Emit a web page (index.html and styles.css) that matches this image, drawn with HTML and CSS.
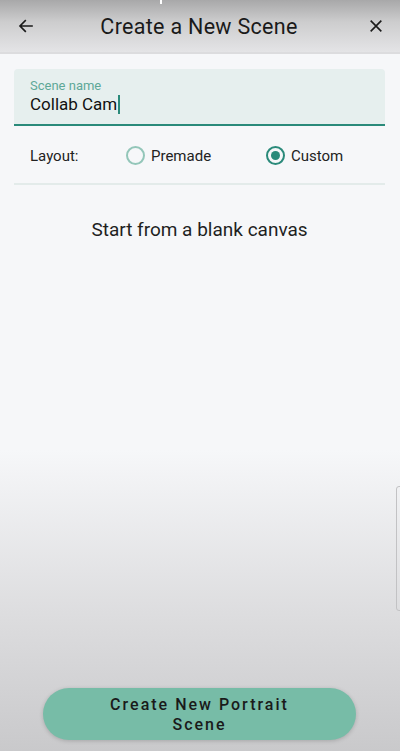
FILE: index.html
```html
<!DOCTYPE html>
<html lang="en">
<head>
    <meta charset="UTF-8">
    <title>Create a New Scene</title>
    <meta name="viewport" content="width=device-width, initial-scale=1">
    <link rel="stylesheet" href="styles.css">
</head>
<body>
    <div class="screen">
        <span class="notch-mark"></span>
        <header class="topbar">
            <button class="icon-btn" aria-label="Back">
                <svg width="18" height="18" viewBox="0 0 24 24"><path d="M20 12H5M11 5l-7 7 7 7" fill="none" stroke="#1a1a1a" stroke-width="2.2" stroke-linecap="square"/></svg>
            </button>
            <h1>Create a New Scene</h1>
            <button class="icon-btn" aria-label="Close">
                <svg width="16" height="16" viewBox="0 0 24 24"><path d="M4 4l16 16M20 4L4 20" fill="none" stroke="#1a1a1a" stroke-width="2.4"/></svg>
            </button>
        </header>

        <main class="content">
            <div class="text-field">
                <label for="scene-name">Scene name</label>
                <div class="value"><span id="scene-name">Collab Cam</span><span class="caret"></span></div>
            </div>

            <div class="layout-row">
                <span class="layout-label">Layout:</span>
                <label class="radio"><span class="dot"></span>Premade</label>
                <label class="radio checked"><span class="dot"></span>Custom</label>
            </div>

            <p class="hint">Start from a blank canvas</p>
        </main>

        <footer class="bottom">
            <button class="create-btn">Create New Portrait<br>Scene</button>
        </footer>
        <span class="edge-tab"></span>
    </div>
</body>
</html>
```

FILE: styles.css
```css
body {
    margin: 0;
    padding: 0;
    font-family: Roboto, 'Noto Sans', Arial, sans-serif;
}
.screen {
    position: relative;
    width: 400px;
    height: 751px;
    overflow: hidden;
    display: flex;
    flex-direction: column;
    background: linear-gradient(to bottom, #f6f7f9 0, #f6f7f9 450px, #dcdcde 620px, #c9c9cb 751px);
}
.notch-mark {
    position: absolute;
    left: 160px;
    top: 0;
    width: 2px;
    height: 4px;
    background: #fff;
}
.topbar {
    height: 52px;
    display: flex;
    align-items: center;
    justify-content: space-between;
    padding: 0 14px 0 16px;
    background: linear-gradient(to bottom, #a8a8a9 0, #cdcdce 22px, #e4e4e6 52px);
    border-bottom: 2px solid #dcdcde;
}
.topbar h1 {
    margin: 0;
    font-size: 21.5px;
    font-weight: 400;
    color: #1a1a1a;
    letter-spacing: 0.3px;
    padding-right: 4px;
}
.icon-btn {
    background: none;
    border: none;
    padding: 0;
    width: 20px;
    height: 20px;
    display: flex;
    align-items: center;
    justify-content: center;
}
.content {
    flex: 1;
    padding: 15px 15px 0 14px;
}
.text-field {
    background: #e6efee;
    border-radius: 4px 4px 0 0;
    border-bottom: 2px solid #2a8a7a;
    padding: 10px 16px 8px;
    height: 37px;
}
.text-field label {
    display: block;
    font-size: 13px;
    color: #5ea898;
    line-height: 14px;
}
.value {
    font-size: 17px;
    line-height: 22px;
    color: #111;
    display: flex;
    align-items: center;
}
.caret {
    width: 2px;
    height: 19px;
    background: #2a8a7a;
    margin-left: 1px;
}
.layout-row {
    display: flex;
    align-items: center;
    height: 59px;
    padding: 2px 0 0 16px;
    box-sizing: border-box;
    border-bottom: 2px solid #e3ebea;
    font-size: 15px;
    color: #222;
}
.layout-label {
    width: 96px;
    flex-shrink: 0;
}
.radio {
    display: flex;
    align-items: center;
    gap: 6px;
    width: 140px;
    flex-shrink: 0;
}
.dot {
    width: 15px;
    height: 15px;
    border: 2px solid #93c6b9;
    border-radius: 50%;
    position: relative;
}
.radio.checked .dot {
    border-color: #2a8a7a;
}
.radio.checked .dot::after {
    content: "";
    position: absolute;
    left: 3px;
    top: 3px;
    width: 9px;
    height: 9px;
    border-radius: 50%;
    background: #2a8a7a;
}
.hint {
    margin: 33px 0 0;
    text-align: center;
    font-size: 19px;
    color: #1f1f1f;
}
.bottom {
    display: flex;
    justify-content: center;
    padding: 0 44px 11px 43px;
}
.create-btn {
    width: 100%;
    height: 52px;
    border: none;
    border-radius: 26px;
    background: #77bca7;
    box-shadow: 0 1px 4px rgba(0,0,0,0.18);
    font-family: Roboto, 'Noto Sans', Arial, sans-serif;
    font-size: 16px;
    font-weight: 500;
    letter-spacing: 2px;
    line-height: 20px;
    color: #1a1a1a;
    padding: 2px 0 0;
}
.edge-tab {
    position: absolute;
    right: -4px;
    top: 486px;
    width: 6px;
    height: 123px;
    border: 1px solid #c2c2c4;
    border-radius: 3px;
}
```
